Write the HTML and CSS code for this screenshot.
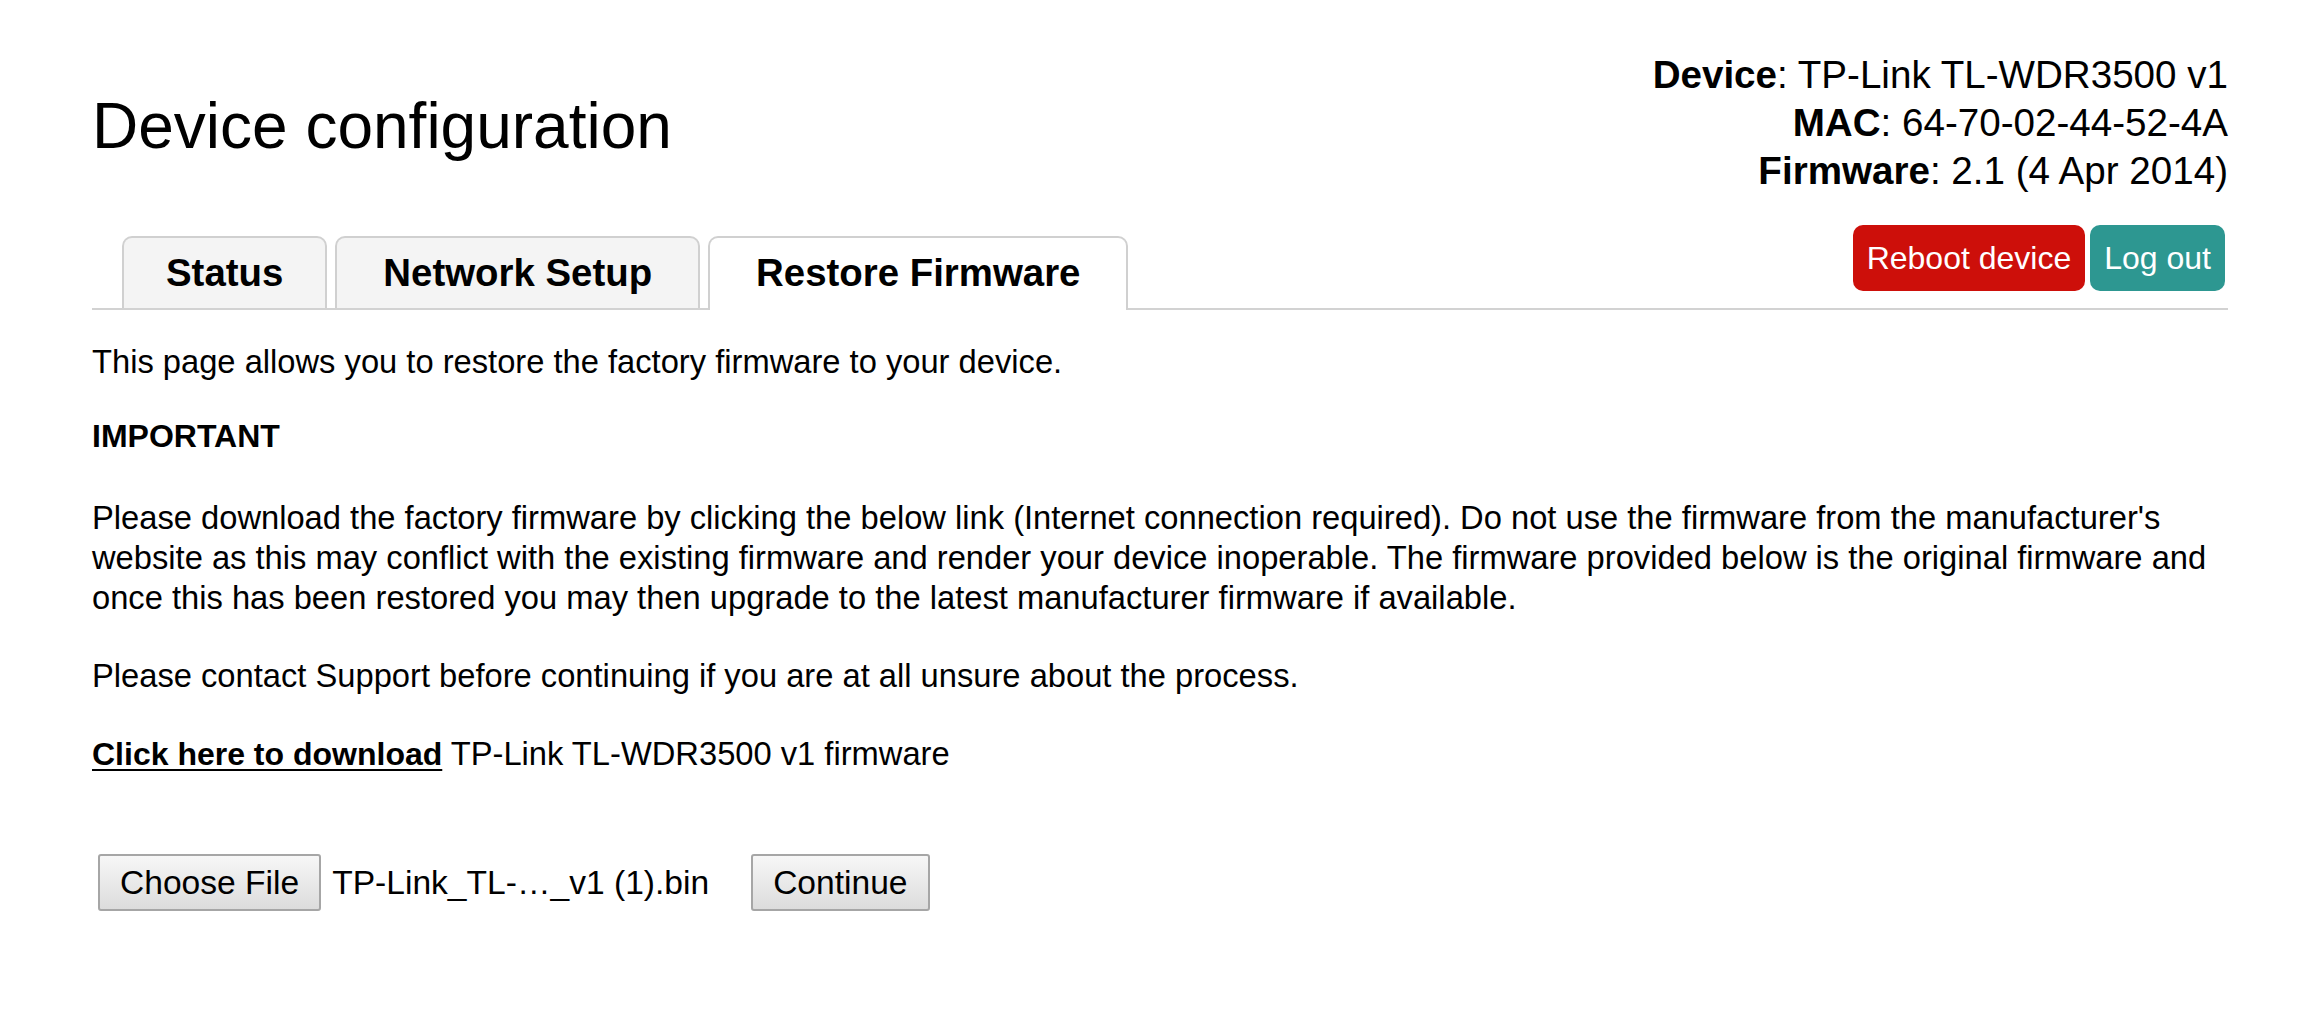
FILE: index.html
```html
<!DOCTYPE html>
<html lang="en">
<head>
<meta charset="utf-8">
<title>Device configuration</title>
<link rel="stylesheet" href="styles.css">
</head>
<body>
<div class="page">
  <header class="header">
    <h1 class="title">Device configuration</h1>
    <div class="info">
      <div><b>Device</b>: TP-Link TL-WDR3500 v1</div>
      <div><b>MAC</b>: 64-70-02-44-52-4A</div>
      <div><b>Firmware</b>: 2.1 (4 Apr 2014)</div>
    </div>
  </header>
  <nav class="tabbar">
    <ul class="tabs">
      <li class="tab">Status</li>
      <li class="tab">Network Setup</li>
      <li class="tab tab-active">Restore Firmware</li>
    </ul>
    <div class="actions">
      <button class="btn btn-reboot" type="button">Reboot device</button>
      <button class="btn btn-logout" type="button">Log out</button>
    </div>
  </nav>
  <main class="content">
    <p class="para para-intro">This page allows you to restore the factory firmware to your device.</p>
    <p class="para para-strong">IMPORTANT</p>
    <p class="para">Please download the factory firmware by clicking the below link (Internet connection required). Do not use the firmware from the manufacturer's website as this may conflict with the existing firmware and render your device inoperable. The firmware provided below is the original firmware and once this has been restored you may then upgrade to the latest manufacturer firmware if available.</p>
    <p class="para">Please contact Support before continuing if you are at all unsure about the process.</p>
    <p class="para"><a class="dl-link" href="#">Click here to download</a> TP-Link TL-WDR3500 v1 firmware</p>
    <form class="upload">
      <button class="form-btn file-btn" type="button">Choose File</button>
      <span class="file-name">TP-Link_TL-…_v1 (1).bin</span>
      <button class="form-btn continue-btn" type="button">Continue</button>
    </form>
  </main>
</div>
</body>
</html>
```
FILE: styles.css
```css
html, body {
  margin: 0;
  padding: 0;
  background: #ffffff;
}

body {
  font-family: "Liberation Sans", Arial, sans-serif;
  color: #000000;
  font-size: 32px;
}

.page {
  padding: 51px 70px 0 92px;
}

.header {
  display: flex;
  justify-content: space-between;
  align-items: flex-start;
}

.title {
  margin: 39px 0 0 0;
  font-size: 64px;
  font-weight: normal;
  line-height: 1.15;
}

.info {
  text-align: right;
  font-size: 38.6px;
  line-height: 48px;
}

.info b {
  font-weight: bold;
}

.tabbar {
  margin-top: 30px;
  display: flex;
  justify-content: space-between;
  align-items: flex-end;
  border-bottom: 2px solid #d2d2d2;
}

.tabs {
  list-style: none;
  margin: 0 0 0 30px;
  padding: 0;
  display: flex;
  align-items: flex-end;
  gap: 8px;
}

.tab {
  font-size: 38.4px;
  font-weight: bold;
  line-height: 46px;
  padding: 12px 46px 12px;
  border: 2px solid #d0d0d0;
  border-bottom: none;
  border-radius: 10px 10px 0 0;
  background: #f4f4f4;
}

.tab:first-child {
  padding: 12px 42px 12px;
}

.tab-active {
  background: #ffffff;
  padding-bottom: 14px;
  margin-bottom: -2px;
}

.actions {
  display: flex;
  gap: 5px;
  margin: 0 3px 17px 0;
}

.btn {
  font-family: "Liberation Sans", Arial, sans-serif;
  font-size: 32px;
  line-height: 66px;
  height: 66px;
  padding: 0 14px;
  border: none;
  border-radius: 10px;
  color: #ffffff;
}

.btn-reboot {
  background: #cd0f0a;
}

.btn-logout {
  background: #2d9791;
}

.content {
  padding-top: 32px;
}

.para {
  margin: 0 0 38px 0;
  font-size: 32.7px;
  line-height: 40px;
}

.para-intro {
  margin-bottom: 34px;
}

.para-strong {
  font-weight: bold;
  font-size: 32px;
  margin-bottom: 42px;
}

.dl-link {
  color: #000000;
  font-weight: bold;
  font-size: 32px;
  text-decoration: underline;
  text-decoration-thickness: 2px;
  text-underline-offset: 4px;
}

.upload {
  margin-top: 80px;
  display: flex;
  align-items: center;
  font-size: 33.6px;
}

.form-btn {
  font-family: "Liberation Sans", Arial, sans-serif;
  font-size: 33.6px;
  height: 57px;
  padding: 0 20px;
  border: 2px solid #a6a6a6;
  border-radius: 3px;
  background: linear-gradient(#f7f7f7, #dcdcdc);
  color: #000000;
}

.file-btn {
  margin-left: 6px;
}

.file-name {
  margin-left: 11px;
}

.continue-btn {
  margin-left: 42px;
}
```
